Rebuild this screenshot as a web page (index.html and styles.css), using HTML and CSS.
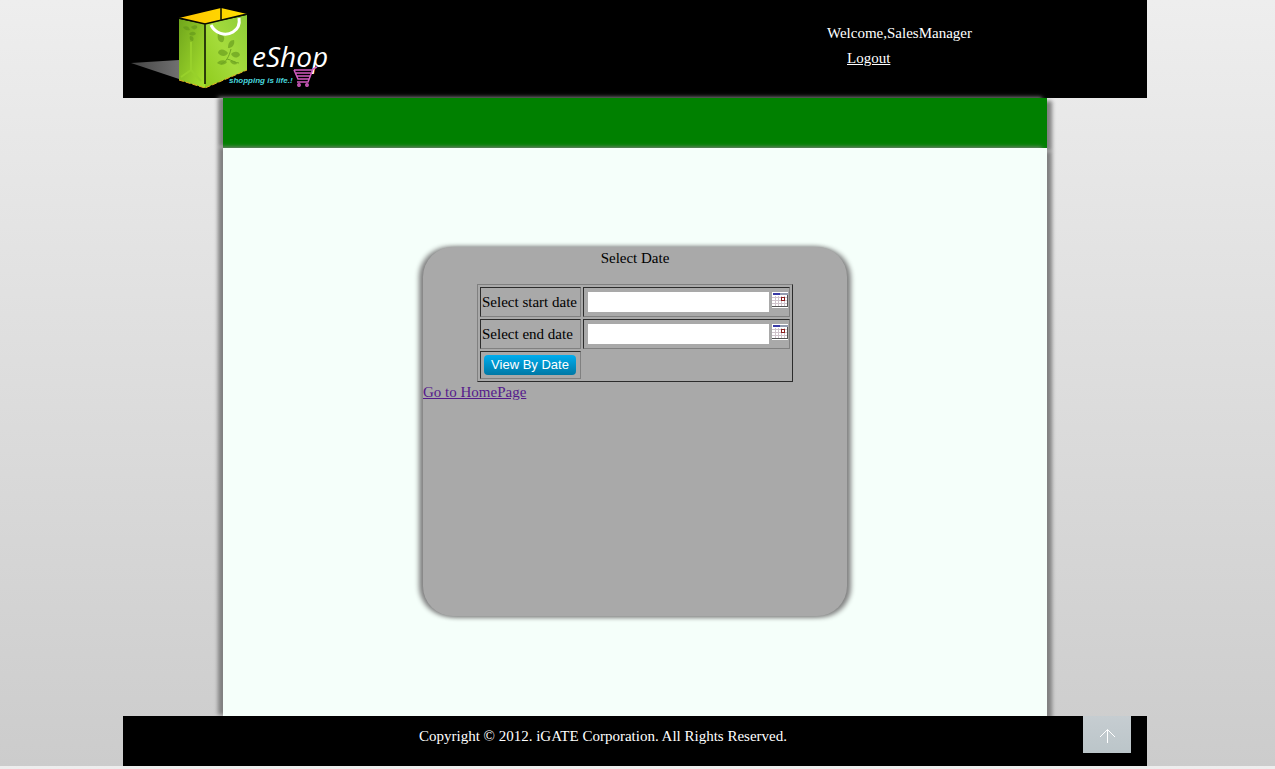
FILE: index.html
```html
<!DOCTYPE html>
<html lang="en">
<head>
<meta charset="utf-8">
<title>eShop - Select Date</title>
<link rel="stylesheet" href="styles.css">
</head>
<body>
<div class="page">
  <header class="header">
    <svg class="logo" viewBox="0 0 210 98" role="img" aria-label="eShop, shopping is life">
      <defs>
        <linearGradient id="side" x1="0" y1="0" x2="1" y2="1"><stop offset="0" stop-color="#6fa51c"/><stop offset="1" stop-color="#a9e32f"/></linearGradient>
        <linearGradient id="front" x1="0" y1="1" x2="1" y2="0"><stop offset="0" stop-color="#8fcb1c"/><stop offset=".5" stop-color="#a5dc3c"/><stop offset="1" stop-color="#8dcc38"/></linearGradient>
        <linearGradient id="inner" x1="0" y1="0" x2="1" y2="0"><stop offset="0" stop-color="#ffc400"/><stop offset="1" stop-color="#ffe000"/></linearGradient>
        <linearGradient id="ground" x1="0" y1="0" x2="1" y2="0"><stop offset="0" stop-color="#444"/><stop offset="1" stop-color="#707070"/></linearGradient>
      </defs>
      <path d="M8 63 56 60V79z" fill="url(#ground)"/>
      <path d="M56 18 98 8 124 14 82 24z" fill="url(#inner)"/>
      <path d="M56 19 82 24V88L56 80z" fill="url(#side)"/>
      <path d="M82 24 124 15V70L82 88z" fill="url(#front)"/>
      <path d="M56 80 82 88 124 70" fill="none" stroke="#e5b020" stroke-width="1" stroke-dasharray="5 2"/>
      <path d="M56 18 82 24 124 14M98 8V20M82 24V84" fill="none" stroke="#080b00" stroke-width="1.5"/>
      <path d="M68 42V70L58 77M68 70 78 81" fill="none" stroke="#98d12b" stroke-width="2"/>
      <g fill="#61951a" opacity=".6">
        <path d="M60 27c4-2 6 0 7 3-4 1-6-1-7-3zM68 27c4-3 7-2 6 1-2 2-4 2-6-1zM66 34c2-3 6-3 7 0-3 2-5 2-7 0zM67 36c4 0 4 3 3 5-3 0-4-2-3-5z"/>
        <path d="M95 33c5 1 8 4 5 9-5 1-6-4-5-9zM105 48c0-5 2-8 6-8 1 4-1 8-6 8zM95 53c1-5 7-4 10 0-2 4-7 4-10 0zM108 54c3-3 8-3 9 1-3 4-7 3-9-1zM94 63c2-3 7-4 10-1-2 3-6 4-10 1zM107 61c4-1 6 0 7 3-3 1-6 0-7-3z"/>
      </g>
      <path d="M98 64c5-2 8-7 10-15M104 59c5 1 8 4 12 4" fill="none" stroke="#70a622"/>
      <path d="M88 25c4 8 14 12 22 7 5-3 7-8 6-14" fill="none" stroke="#fff" stroke-width="3"/>
      <text class="logo-name" x="129" y="67">eShop</text>
      <text class="logo-tag" x="106" y="83">shopping is life.!</text>
      <g fill="none" stroke="#d35bc0" stroke-width="1.5">
        <path d="M194 67 190 69 185 82H174M171 70H189M171 70 175 79H186M173 73H188M174 76H187"/>
        <circle cx="176" cy="85" r="1.2"/><circle cx="184" cy="85" r="1.2"/>
      </g>
    </svg>
    <div class="account">
      <span>Welcome,SalesManager</span>
      <a class="logout" href="#">Logout</a>
    </div>
  </header>
  <nav class="menu" aria-label="Main"></nav>
  <main class="content">
    <form class="card">
      <p class="title">Select Date</p>
      <table class="dates">
        <tr>
          <td class="name"><label for="start">Select start date</label></td>
          <td><div class="field"><input class="date" id="start" type="text">
            <button class="pick" type="button" aria-label="Pick start date"><svg class="calendar" viewBox="0 0 16 16" shape-rendering="crispEdges"><path fill="#fff" d="M0 0h16v16H0z"/><path fill="#393aa5" d="M1 1h7v2H1z"/><path fill="#929baf" d="M8 1h8v2H8z"/><path d="M3.500 4V14M6.500 4V14M9.500 4V14M12.500 4V14M0 5.500H15M0 8.500H15M0 11.500H15" stroke="#d0c4cc"/><path d="M9.500 5.500h3v3h-3z" fill="#fff" stroke="#8b1f1f"/><path d="M0 14.500H16M15.500 3V14" stroke="#555"/></svg></button></div></td>
        </tr>
        <tr>
          <td class="name"><label for="end">Select end date</label></td>
          <td><div class="field"><input class="date" id="end" type="text">
            <button class="pick" type="button" aria-label="Pick end date"><svg class="calendar" viewBox="0 0 16 16" shape-rendering="crispEdges"><path fill="#fff" d="M0 0h16v16H0z"/><path fill="#393aa5" d="M1 1h7v2H1z"/><path fill="#929baf" d="M8 1h8v2H8z"/><path d="M3.500 4V14M6.500 4V14M9.500 4V14M12.500 4V14M0 5.500H15M0 8.500H15M0 11.500H15" stroke="#d0c4cc"/><path d="M9.500 5.500h3v3h-3z" fill="#fff" stroke="#8b1f1f"/><path d="M0 14.500H16M15.500 3V14" stroke="#555"/></svg></button></div></td>
        </tr>
        <tr>
          <td class="name"><button class="submit" type="submit">View By Date</button></td>
        </tr>
      </table>
      <a class="home" href="#">Go to HomePage</a>
    </form>
  </main>
  <footer class="footer">
    <p class="copyright">Copyright © 2012. iGATE Corporation. All Rights Reserved.</p>
    <button class="to-top" type="button" aria-label="Back to top"><svg class="arrow" viewBox="0 0 16 16"><path d="M8.500 15V1.500M1 9 8.500 1.500 16 9" fill="none" stroke="#fff"/></svg></button>
  </footer>
</div>
</body>
</html>
```
FILE: styles.css
```css
* { box-sizing: border-box; }
html { background: linear-gradient(#eee, #ccc); }
body {
  margin: 0;
  padding-right: 5px;
  font: 15px/20px "Liberation Serif", "Times New Roman", serif;
  color: #000;
}
p { margin: 0; }
.page { max-width: 1024px; margin: 0 auto; }
.header {
  display: flex;
  justify-content: space-between;
  background: #000;
  color: #fff;
}
.logo { display: block; width: 210px; height: 98px; }
.logo-name { font: italic 28px "Open Sans", sans-serif; fill: #fff; }
.logo-tag { font: italic bold 8px "Liberation Sans", sans-serif; fill: #49d5dd; }
.account {
  display: flex;
  flex-direction: column;
  align-items: flex-start;
  gap: 5px;
  width: 320px;
  padding-top: 23px;
}
.logout { margin-left: 20px; color: #fff; }
.menu, .content {
  margin: 0 100px;
  box-shadow: 5px 3px 4px #808080, -5px -1px 4px #808080;
}
.menu { height: 50px; background: #008000; }
.content { padding: 99px 200px 100px; background: #f5fffa; }
.card {
  min-height: 369px;
  border-radius: 30px;
  background: #a9a9a9;
  box-shadow: 4px 1px 5px #808080, -4px 0 5px #808080;
}
.title { padding: 1px 0 16px; text-align: center; }
.dates {
  margin: 0 auto;
  border: 1px solid;
  border-color: #808080 #2c2c2c #2c2c2c #808080;
  border-spacing: 2px;
}
.dates td {
  padding: 1px;
  border: 1px solid;
  border-color: #2c2c2c #808080 #808080 #2c2c2c;
}
.dates .name { width: 101px; }
.field { display: flex; align-items: flex-start; gap: 3px; padding: 3px 0 3px 3px; }
.date { width: 181px; height: 20px; padding: 0 2px; border: 0; background: #fff; }
.pick { padding: 0; border: 0; background: none; }
.calendar { display: block; width: 16px; height: 16px; }
.submit {
  display: block;
  margin: 2px;
  width: 92px;
  height: 20px;
  padding: 0;
  border: 0;
  border-radius: 4px;
  background: linear-gradient(#00adee, #0078a5);
  color: #fff;
  font: 13px/20px "Liberation Sans", Arial, sans-serif;
}
.home { color: #551a8b; }
.footer {
  position: relative;
  display: flex;
  align-items: flex-start;
  min-height: 50px;
  padding-right: 16px;
  background: #000;
  color: #fff;
}
.copyright { flex: 1; padding-top: 10px; text-align: center; }
.to-top {
  display: grid;
  place-items: center;
  width: 48px;
  height: 37px;
  padding: 3px 0 0;
  border: 0;
  background: linear-gradient(#c6cdd1, #bbc5c9);
}
.arrow { width: 16px; height: 16px; }
```
